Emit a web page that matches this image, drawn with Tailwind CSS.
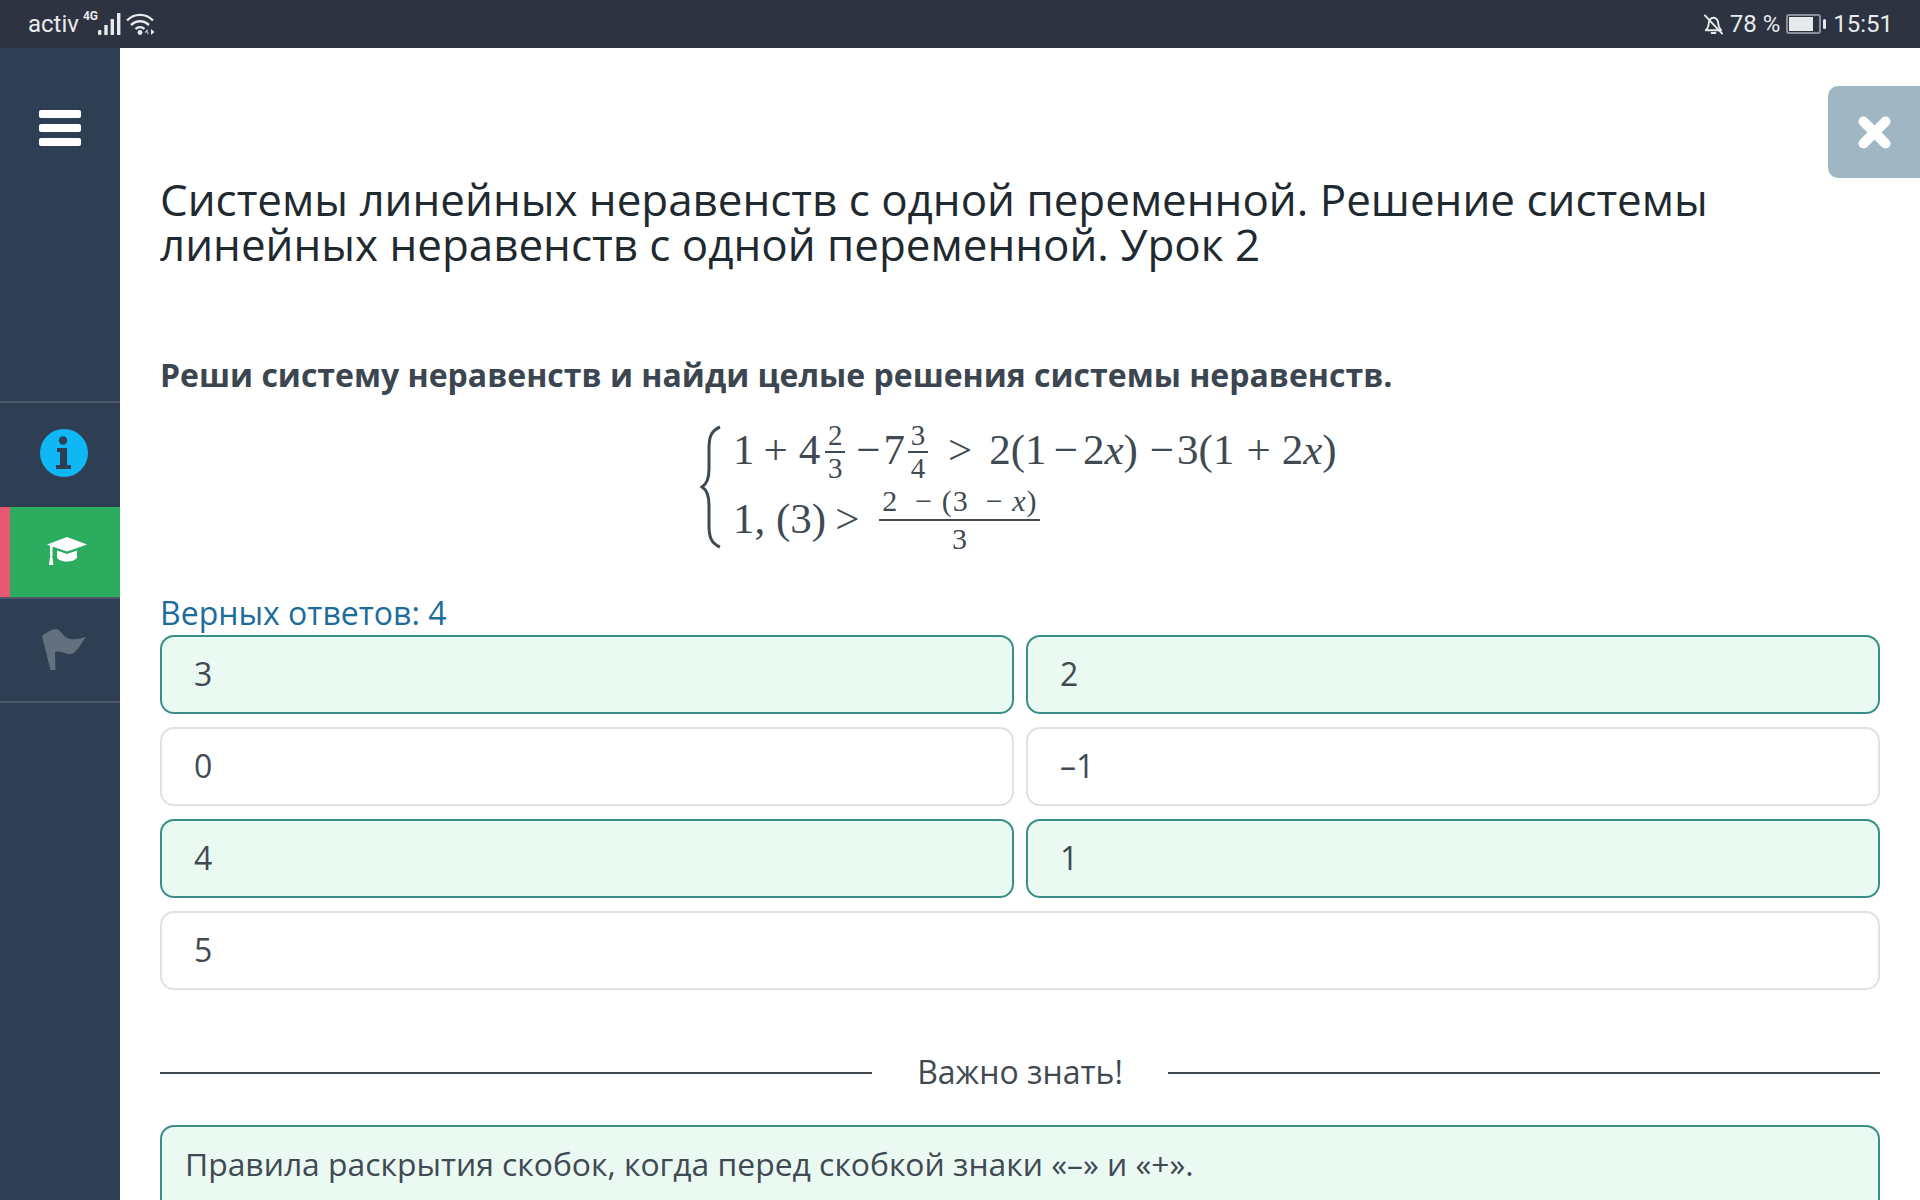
<!DOCTYPE html>
<html lang="ru">
<head>
  <meta charset="UTF-8">
  <title>Системы линейных неравенств</title>
  <script src="https://cdn.jsdelivr.net/npm/@tailwindcss/browser@4"></script>
</head>
<body class="bg-white font-['Open_Sans',sans-serif] text-[#3f4a52]">
<div class="relative w-[1920px] h-[1200px] overflow-hidden flex flex-col">

  <!-- status bar -->
  <header class="h-12 shrink-0 bg-[#2d3340] text-[#e8eaee] flex items-center justify-between pl-7 pr-[27px] font-['Roboto',sans-serif] text-[24px]">
    <div class="flex items-center">
      <span>activ</span>
      <span class="text-[12px] font-bold ml-[4px] mb-[16px] leading-none">4G</span>
      <svg class="w-[23px] h-[24px]" viewBox="0 0 23 24" fill="#e8eaee">
        <rect x="0" y="18" width="3.4" height="5" rx="1.2"/><rect x="6.3" y="13" width="3.4" height="10" rx="0.6"/><rect x="12.6" y="7" width="3.4" height="16" rx="0.6"/><rect x="19" y="1" width="3.4" height="22" rx="0.6"/>
      </svg>
      <svg class="w-[30px] h-[24px] ml-[5px]" viewBox="0 0 30 24" fill="none" stroke="#e8eaee" stroke-width="2.4">
        <path d="M1 8.5C8 1 20 1 27 8.5"/><path d="M5 13C10.500 8 17.500 8 23 13"/><path d="M9.500 17C12 14.500 16 14.500 18.500 17"/>
        <circle cx="14" cy="20.500" r="2.400" fill="#e8eaee" stroke="none"/>
        <path d="M21.500 23V17l-2.800 3.500h4.200M25 17v6l3.500-3z" fill="#e8eaee" stroke="none"/>
      </svg>
    </div>
    <div class="flex items-center">
      <svg class="w-[21px] h-[24px]" viewBox="0 0 22 24" fill="none" stroke="#e8eaee" stroke-width="2">
        <path d="M3 18.500c2-2 3-4 3-7 0-3 2-6 5-6s5 3 5 6c0 3 1 5 3 7z" stroke-linejoin="round"/>
        <path d="M2 3l18 19M9 21.500h4" stroke-linecap="round"/>
      </svg>
      <span class="ml-[6px]">78 %</span>
      <span class="relative ml-[6px] w-[35px] h-[20px] rounded-[3px] border-2 border-[#8b919c] px-px py-px">
        <span class="block w-[24px] h-[14px] bg-[#e8eaee]"></span>
        <span class="absolute right-[-7px] top-[3px] w-[3px] h-[10px] bg-[#e8eaee] rounded-sm"></span>
      </span>
      <span class="ml-[12px]">15:51</span>
    </div>
  </header>

  <div class="flex flex-1 min-h-0">
    <!-- sidebar -->
    <aside class="w-[120px] shrink-0 bg-[#2e3f54] flex flex-col">
      <div class="h-[353px] shrink-0 flex justify-center pt-[62px]">
        <div class="flex flex-col gap-[6px]">
          <span class="block w-[42px] h-[8px] bg-white rounded-[2px]"></span>
          <span class="block w-[42px] h-[8px] bg-white rounded-[2px]"></span>
          <span class="block w-[42px] h-[8px] bg-white rounded-[2px]"></span>
        </div>
      </div>
      <div class="h-[106px] shrink-0 border-t-2 border-[#4b5b6d] flex items-center justify-center pl-[8px] pb-[4px]">
        <svg class="w-[48px] h-[48px]" viewBox="0 0 48 48">
          <circle cx="24" cy="24" r="24" fill="#10b7f5"/>
          <circle cx="23" cy="11.500" r="4.200" fill="#2e3f54"/>
          <path d="M17 19h10v17h4v4H16v-4h4V23h-3z" fill="#2e3f54"/>
        </svg>
      </div>
      <div class="h-[90px] shrink-0 bg-[#2bac5e] border-l-[10px] border-[#e8586e] flex items-center justify-center pl-[3px]">
        <svg class="w-[42px] h-[30px]" viewBox="0 0 42 30" fill="#fff">
          <path d="M21 0L41 7.500 21 14.500 7 9.800 6.500 10.200V19H4V8.800L1 7.500z"/>
          <path d="M11 13.500l10 3.400 10-3.400v6.500c0 2.500-5 4.500-10 4.500s-10-2-10-4.500z"/>
          <path d="M5.200 18.500c1 0 1.400 2 2.200 9.500H3c.8-7.500 1.200-9.500 2.200-9.500z"/>
        </svg>
      </div>
      <div class="h-[106px] shrink-0 border-t-2 border-b-2 border-[#4b5b6d] flex items-center justify-center pl-[8px]">
        <svg class="w-[44px] h-[42px]" viewBox="0 0 44 42" fill="#63717f">
          <path d="M0 7C5 3 10 0 14 0C19 0 21 9 28 10C34 11 40 9 44 8C39 14 35 24 29 25C24 26 20 21 13 23L13.500 41H8.500Z"/>
        </svg>
      </div>
    </aside>

    <!-- content -->
    <main class="flex-1 min-w-0 pl-10 pr-10 pt-[129px] flex flex-col">
      <h1 class="text-[43.94px] leading-[45px] text-[#1f2a30]">Системы линейных неравенств с одной переменной. Решение системы линейных неравенств с одной переменной. Урок 2</h1>

      <p class="mt-[86px] text-[32px] leading-[44px] font-bold text-[#3b4650]">Реши систему неравенств и найди целые решения системы неравенств.</p>

      <!-- math -->
      <div class="mt-[28px] h-[124px] pl-[540px] flex font-['Liberation_Serif',serif] text-[43px] leading-none text-[#3f4a52]">
        <svg class="w-[22px] h-[124px] shrink-0" viewBox="0 0 22 124" fill="none" stroke="#3f4a52" stroke-width="3">
          <path d="M20 2C10 6 9 14 9 24v20C9 54 7 59 2 62c5 3 7 8 7 18v20c0 10 1 18 11 22"/>
        </svg>
        <div class="ml-[11px] flex flex-col">
          <div class="flex items-center h-[48px] whitespace-pre">
            <span>1</span><span class="ml-[9px]">+</span><span class="ml-[11px]">4</span>
            <span class="ml-[5px] mt-[6px] w-[20px] flex flex-col items-center text-[29px] leading-[31px]"><span>2</span><span class="w-full border-t-2 border-[#3f4a52]"></span><span>3</span></span>
            <span class="ml-[11px]">−</span><span class="ml-[3px]">7</span>
            <span class="ml-[3px] mt-[6px] w-[20px] flex flex-col items-center text-[29px] leading-[31px]"><span>3</span><span class="w-full border-t-2 border-[#3f4a52]"></span><span>4</span></span>
            <span class="ml-[20px]">&gt;</span><span class="ml-[17px]">2(1</span><span class="ml-[7px]">−</span><span class="ml-[5px]">2<i>x</i>)</span><span class="ml-[12px]">−</span><span class="ml-[3px]">3(1</span><span class="ml-[12px]">+</span><span class="ml-[11px]">2<i>x</i>)</span>
          </div>
          <div class="flex items-center h-[68px] mt-[11px] whitespace-pre">
            <span>1, (3)</span><span class="ml-[9px]">&gt;</span>
            <span class="ml-[20px] mt-[4px] w-[161px] flex flex-col items-center text-[30px] leading-[36px] tracking-[1px]"><span>2  − (3  − <i>x</i>)</span><span class="w-full border-t-2 border-[#3f4a52]"></span><span>3</span></span>
          </div>
        </div>
      </div>

      <div class="mt-[42px] text-[32px] leading-[44px] text-[#1c6d9b]">Верных ответов: 4</div>

      <div class="grid grid-cols-2 gap-x-3 gap-y-[13px] text-[32px] text-[#3f4a52]">
        <div class="h-[79px] rounded-[14px] border-2 border-[#3a8f89] bg-[#ebf9f3] flex items-center pl-8 pb-[2px]">3</div>
        <div class="h-[79px] rounded-[14px] border-2 border-[#3a8f89] bg-[#ebf9f3] flex items-center pl-8 pb-[2px]">2</div>
        <div class="h-[79px] rounded-[14px] border-2 border-[#dfe2e3] flex items-center pl-8 pb-[2px]">0</div>
        <div class="h-[79px] rounded-[14px] border-2 border-[#dfe2e3] flex items-center pl-8 pb-[2px]">–1</div>
        <div class="h-[79px] rounded-[14px] border-2 border-[#3a8f89] bg-[#ebf9f3] flex items-center pl-8 pb-[2px]">4</div>
        <div class="h-[79px] rounded-[14px] border-2 border-[#3a8f89] bg-[#ebf9f3] flex items-center pl-8 pb-[2px]">1</div>
        <div class="col-span-2 h-[79px] rounded-[14px] border-2 border-[#dfe2e3] flex items-center pl-8 pb-[2px]">5</div>
      </div>

      <div class="mt-[60px] flex items-center text-[32px] leading-[44px]">
        <span class="w-[712px] h-0.5 bg-[#3f4a52]"></span>
        <span class="w-[296px] text-center pb-[2px]">Важно знать!</span>
        <span class="flex-1 h-0.5 bg-[#3f4a52]"></span>
      </div>

      <div class="mt-[29px] flex-1 rounded-t-[14px] border-2 border-b-0 border-[#3a8f89] bg-[#ebf9f3] pl-[23px] pt-[15px] text-[31.85px] leading-[44px]">Правила раскрытия скобок, когда перед скобкой знаки «–» и «+».</div>
    </main>
  </div>

  <!-- close -->
  <button class="absolute right-0 top-[86px] w-[92px] h-[92px] rounded-l-[10px] bg-[#a0b6c3] flex items-center justify-center">
    <svg class="w-[33px] h-[33px]" viewBox="0 0 36 36" fill="none" stroke="#fff" stroke-width="11" stroke-linecap="round">
      <path d="M6 6l24 24M30 6L6 30"/>
    </svg>
  </button>
</div>
</body>
</html>
